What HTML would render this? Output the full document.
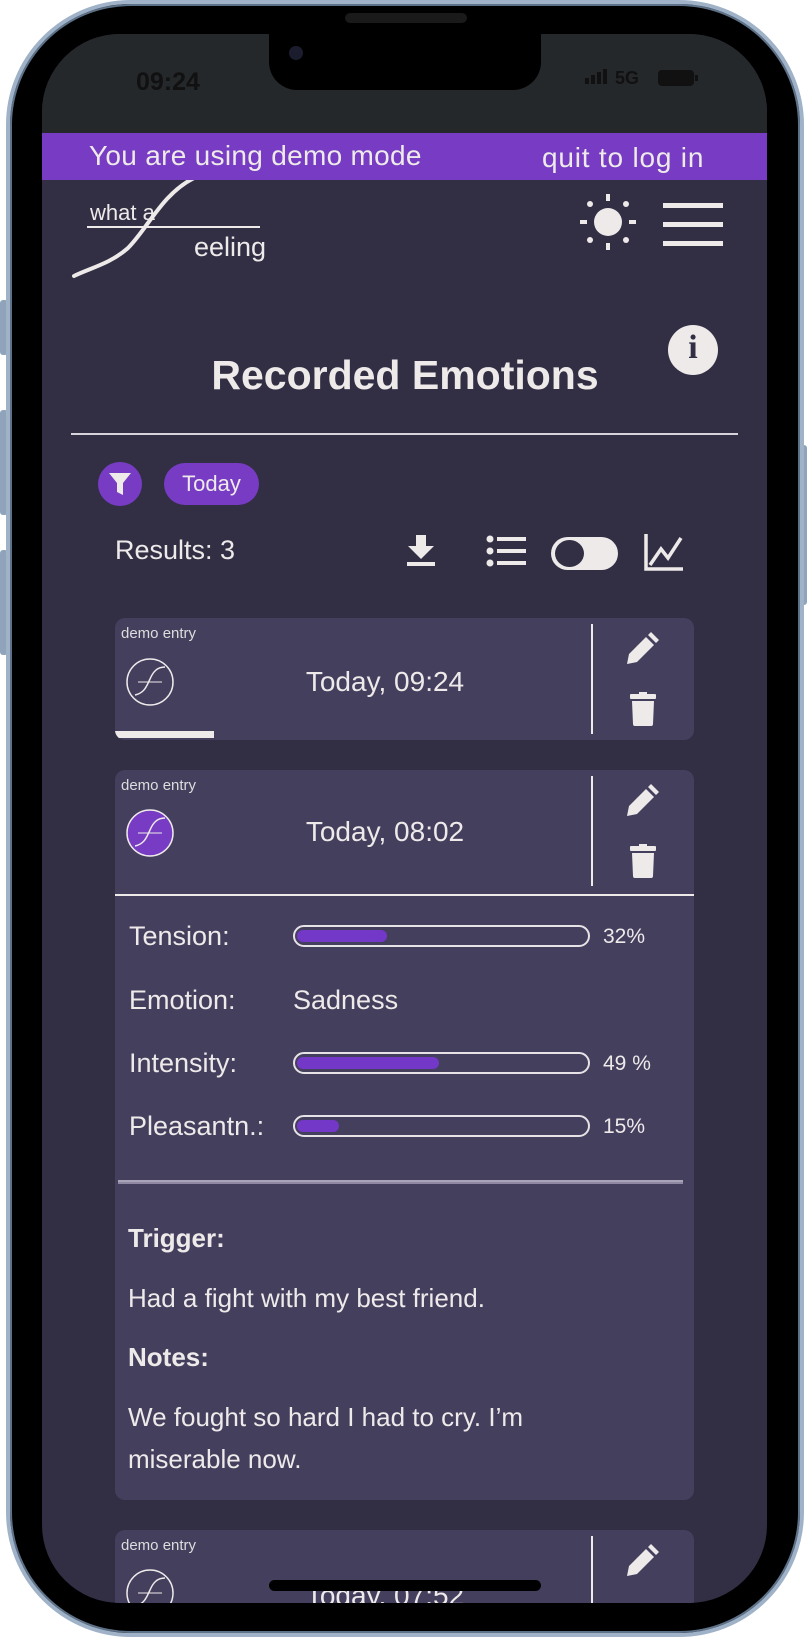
<!DOCTYPE html>
<html><head><meta charset="utf-8"><style>
*{margin:0;padding:0;box-sizing:border-box}
body{width:807px;height:1638px;background:#fff;position:relative;overflow:hidden;font-family:"Liberation Sans",sans-serif;color:#eeeaea}
.a{position:absolute}
.phone{left:6px;top:0;width:798px;height:1637px;border-radius:125px;background:#000;border:4px solid #9fb2c8;box-shadow:inset 0 0 0 2px #5d7188}
.screen{left:42px;top:34px;width:725px;height:1569px;border-radius:78px;background:#322f45;overflow:hidden}
.t{position:absolute;white-space:nowrap;line-height:1}
.card{position:absolute;left:73px;width:579px;background:#453f5e;border-radius:10px}
.bar{position:absolute;left:178px;width:297px;height:22px;border:2px solid #e6e2e6;border-radius:11px}
.bar i{position:absolute;left:2px;top:3px;height:12px;background:#7438c8;border-radius:6px}
</style></head><body>
<div class="a" style="left:0;top:300px;width:8px;height:55px;background:#8fa4bb;border-radius:3px"></div>
<div class="a" style="left:0;top:410px;width:8px;height:105px;background:#8fa4bb;border-radius:3px"></div>
<div class="a" style="left:0;top:550px;width:8px;height:105px;background:#8fa4bb;border-radius:3px"></div>
<div class="a" style="left:799px;top:445px;width:8px;height:160px;background:#8fa4bb;border-radius:3px"></div>
<div class="a phone"></div>
<div class="a screen">
 <div class="a" style="left:0;top:0;width:725px;height:99px;background:#25282b"></div>
 <div class="a" style="left:227px;top:-5px;width:272px;height:61px;background:#000;border-radius:0 0 28px 28px"></div>
 <div class="a" style="left:247px;top:12px;width:14px;height:14px;background:#1b1d2e;border-radius:50%"></div>
 <div class="t" style="left:94px;top:36px;font-size:25px;font-weight:bold;color:#111">09:24</div>
 <div class="a" style="left:543px;top:44px;width:4px;height:6px;background:#111"></div>
 <div class="a" style="left:549px;top:41px;width:4px;height:9px;background:#111"></div>
 <div class="a" style="left:555px;top:38px;width:4px;height:12px;background:#111"></div>
 <div class="a" style="left:561px;top:35px;width:4px;height:15px;background:#111"></div>
 <div class="t" style="left:573px;top:35px;font-size:18px;font-weight:bold;color:#111">5G</div>
 <div class="a" style="left:616px;top:36px;width:36px;height:16px;background:#111;border-radius:4px"></div>
 <div class="a" style="left:653px;top:41px;width:3px;height:6px;background:#111"></div>
 <div class="a" style="left:0;top:99px;width:725px;height:47px;background:#773cc3"></div>
 <div class="t" style="left:47px;top:108px;font-size:28px;letter-spacing:0.3px">You are using demo mode</div>
 <div class="t" style="left:500px;top:110px;font-size:28px;letter-spacing:0.8px">quit to log in</div>
 <!-- logo -->
 <svg class="a" style="left:28px;top:146px" width="200" height="104" viewBox="0 0 200 104">
  <path d="M4 96 C20 88 40 84 58 68 C78 48 92 14 124 -2" stroke="#eeeaea" stroke-width="4" fill="none" stroke-linecap="round"/>
  <line x1="17" y1="47" x2="190" y2="47" stroke="#eeeaea" stroke-width="2"/>
  <text x="20" y="40" font-family="Liberation Sans" font-size="22" fill="#eeeaea">what a</text>
  <text x="124" y="76" font-family="Liberation Sans" font-size="27" fill="#eeeaea">eeling</text>
 </svg>
 <!-- sun -->
 <svg class="a" style="left:538px;top:160px" width="56" height="56" viewBox="0 0 56 56">
  <circle cx="28" cy="28" r="14" fill="#eeeaea"/>
  <g stroke="#eeeaea" stroke-width="4"><line x1="28" y1="0" x2="28" y2="7"/><line x1="28" y1="49" x2="28" y2="56"/><line x1="0" y1="28" x2="7" y2="28"/><line x1="49" y1="28" x2="56" y2="28"/></g>
  <g fill="#eeeaea"><circle cx="10" cy="10" r="3"/><circle cx="46" cy="10" r="3"/><circle cx="10" cy="46" r="3"/><circle cx="46" cy="46" r="3"/></g>
 </svg>
 <div class="a" style="left:621px;top:169px;width:60px;height:5px;background:#eeeaea"></div>
 <div class="a" style="left:621px;top:188px;width:60px;height:5px;background:#eeeaea"></div>
 <div class="a" style="left:621px;top:207px;width:60px;height:5px;background:#eeeaea"></div>
 <div class="a" style="left:626px;top:291px;width:50px;height:50px;border-radius:50%;background:#eeeaea"></div>
 <div class="t" style="left:626px;top:297px;width:50px;text-align:center;font-size:34px;font-weight:bold;color:#322f45;font-family:'Liberation Serif',serif">i</div>
 <div class="t" style="left:0;top:321px;width:726px;text-align:center;font-size:41px;font-weight:bold">Recorded Emotions</div>
 <div class="a" style="left:29px;top:399px;width:667px;height:2px;background:#d8d4dc"></div>
 <!-- filter -->
 <div class="a" style="left:56px;top:428px;width:44px;height:44px;border-radius:50%;background:#773cc3"></div>
 <svg class="a" style="left:64px;top:436px" width="28" height="28" viewBox="0 0 28 28"><path d="M3 3 H25 L17 13 V25 L11 22 V13 Z" fill="#eeeaea"/></svg>
 <div class="a" style="left:122px;top:429px;width:95px;height:42px;border-radius:21px;background:#773cc3"></div>
 <div class="t" style="left:122px;top:439px;width:95px;text-align:center;font-size:22px">Today</div>
 <div class="t" style="left:73px;top:503px;font-size:27px">Results: 3</div>
 <!-- download -->
 <svg class="a" style="left:364px;top:500px" width="30" height="34" viewBox="0 0 30 34"><path d="M10 1 H20 V12 H28 L15 25 L2 12 H10 Z" fill="#eeeaea"/><rect x="1" y="28" width="28" height="4" fill="#eeeaea"/></svg>
 <!-- list -->
 <svg class="a" style="left:444px;top:500px" width="40" height="34" viewBox="0 0 40 34"><g fill="#eeeaea"><circle cx="4" cy="5" r="3.5"/><circle cx="4" cy="17" r="3.5"/><circle cx="4" cy="29" r="3.5"/><rect x="11" y="3" width="29" height="4"/><rect x="11" y="15" width="29" height="4"/><rect x="11" y="27" width="29" height="4"/></g></svg>
 <!-- toggle -->
 <div class="a" style="left:509px;top:503px;width:67px;height:33px;border-radius:17px;background:#eeeaea"></div>
 <div class="a" style="left:513px;top:506px;width:29px;height:27px;border-radius:50%;background:#322f45"></div>
 <!-- chart -->
 <svg class="a" style="left:602px;top:498px" width="40" height="40" viewBox="0 0 40 40"><path d="M2 2 V37 H39" stroke="#eeeaea" stroke-width="3.5" fill="none"/><path d="M6 33 L17 17 L24 26 L37 6" stroke="#eeeaea" stroke-width="3.5" fill="none"/></svg>

 <!-- card 1 -->
 <div class="card" style="top:584px;height:122px;overflow:hidden">
  <div class="t" style="left:6px;top:8px;font-size:15px;color:#ddd">demo entry</div>
  <svg class="a" style="left:10px;top:39px" width="50" height="50" viewBox="0 0 50 50"><circle cx="25" cy="25" r="23" stroke="#eeeaea" stroke-width="1.5" fill="none"/><path d="M10 38 C20 36 22 28 25 22 C28 15 32 10 40 10" stroke="#eeeaea" stroke-width="1.5" fill="none"/><line x1="13" y1="25" x2="37" y2="25" stroke="#eeeaea" stroke-width="1"/></svg>
  <div class="t" style="left:100px;top:50px;width:340px;text-align:center;font-size:28px">Today, 09:24</div>
  <div class="a" style="left:476px;top:6px;width:2px;height:110px;background:#eeeaea"></div>
  <div class="a" style="left:0;top:113px;width:99px;height:7px;background:#eeeaea"></div>
 </div>
 <!-- card 2 -->
 <div class="card" style="top:736px;height:730px">
  <div class="t" style="left:6px;top:8px;font-size:15px;color:#ddd">demo entry</div>
  <svg class="a" style="left:10px;top:38px" width="50" height="50" viewBox="0 0 50 50"><circle cx="25" cy="25" r="23" fill="#773cc3" stroke="#eeeaea" stroke-width="1.5"/><path d="M10 38 C20 36 22 28 25 22 C28 15 32 10 40 10" stroke="#eeeaea" stroke-width="1.5" fill="none"/><line x1="13" y1="25" x2="37" y2="25" stroke="#eeeaea" stroke-width="1"/></svg>
  <div class="t" style="left:100px;top:48px;width:340px;text-align:center;font-size:28px">Today, 08:02</div>
  <div class="a" style="left:476px;top:6px;width:2px;height:110px;background:#eeeaea"></div>
  <div class="a" style="left:0;top:124px;width:579px;height:2px;background:#eeeaea"></div>
  <div class="t" style="left:14px;top:153px;font-size:27px">Tension:</div>
  <div class="bar" style="top:155px"><i style="width:90px"></i></div>
  <div class="t" style="left:488px;top:156px;font-size:21px">32%</div>
  <div class="t" style="left:14px;top:217px;font-size:27px">Emotion:</div>
  <div class="t" style="left:178px;top:217px;font-size:27px">Sadness</div>
  <div class="t" style="left:14px;top:280px;font-size:27px">Intensity:</div>
  <div class="bar" style="top:282px"><i style="width:142px"></i></div>
  <div class="t" style="left:488px;top:283px;font-size:21px">49 %</div>
  <div class="t" style="left:14px;top:343px;font-size:27px">Pleasantn.:</div>
  <div class="bar" style="top:345px"><i style="width:42px"></i></div>
  <div class="t" style="left:488px;top:346px;font-size:21px">15%</div>
  <div class="a" style="left:3px;top:410px;width:565px;height:4px;border-top:2px solid #aaa3b8;border-bottom:2px solid #8f88a2"></div>
  <div class="t" style="left:13px;top:455px;font-size:26px;font-weight:bold">Trigger:</div>
  <div class="t" style="left:13px;top:515px;font-size:26px">Had a fight with my best friend.</div>
  <div class="t" style="left:13px;top:574px;font-size:26px;font-weight:bold">Notes:</div>
  <div class="t" style="left:13px;top:634px;font-size:26px">We fought so hard I had to cry. I’m</div>
  <div class="t" style="left:13px;top:676px;font-size:26px">miserable now.</div>
 </div>
 <!-- card 3 -->
 <div class="card" style="top:1496px;height:120px">
  <div class="t" style="left:6px;top:8px;font-size:15px;color:#ddd">demo entry</div>
  <svg class="a" style="left:10px;top:38px" width="50" height="50" viewBox="0 0 50 50"><circle cx="25" cy="25" r="23" stroke="#eeeaea" stroke-width="1.5" fill="none"/><path d="M10 38 C20 36 22 28 25 22 C28 15 32 10 40 10" stroke="#eeeaea" stroke-width="1.5" fill="none"/><line x1="13" y1="25" x2="37" y2="25" stroke="#eeeaea" stroke-width="1"/></svg>
  <div class="t" style="left:100px;top:52px;width:340px;text-align:center;font-size:28px">Today, 07:52</div>
  <div class="a" style="left:476px;top:6px;width:2px;height:110px;background:#eeeaea"></div>
 </div>
 <div class="a" style="left:227px;top:1546px;width:272px;height:11px;border-radius:6px;background:#000"></div>
</div>
<svg width="0" height="0" style="position:absolute"><defs>
<symbol id="pen" viewBox="0 0 36 36"><path d="M26 2 L34 10 L31 13 L23 5 Z M21 7 L29 15 L12 32 L2 34 L4 24 Z" fill="#eeeaea"/></symbol>
<symbol id="bin" viewBox="0 0 28 34"><rect x="1" y="2" width="26" height="5" rx="1" fill="#eeeaea"/><rect x="10" y="0" width="8" height="3" fill="#eeeaea"/><path d="M3 9 H25 L24 32 Q24 34 22 34 H6 Q4 34 4 32 Z" fill="#eeeaea"/></symbol></defs></svg>
<svg class="a" style="left:625px;top:630px" width="36" height="36"><use href="#pen"/></svg>
<svg class="a" style="left:629px;top:692px" width="28" height="34"><use href="#bin"/></svg>
<svg class="a" style="left:625px;top:782px" width="36" height="36"><use href="#pen"/></svg>
<svg class="a" style="left:629px;top:844px" width="28" height="34"><use href="#bin"/></svg>
<svg class="a" style="left:625px;top:1542px" width="36" height="36"><use href="#pen"/></svg>
<div class="a" style="left:345px;top:13px;width:122px;height:10px;border-radius:5px;background:#1a1a1a"></div>
</body></html>
